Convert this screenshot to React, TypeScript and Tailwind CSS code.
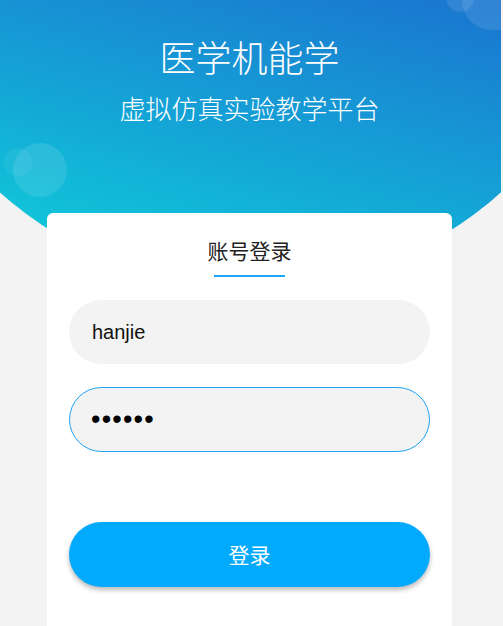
import { useState } from 'react';

const cjk = 'font-["Noto_Sans_CJK_SC","Liberation_Sans",sans-serif]';

export default function App() {
    const [account, setAccount] = useState('hanjie');
    const [password, setPassword] = useState('123456');

    return (
        <div className={`relative w-full h-[626px] overflow-hidden bg-[#f3f3f3] ${cjk}`}>
            {/* curved gradient banner behind the card */}
            <div className="absolute top-0 left-0 w-[501px] h-[288px] overflow-hidden bg-[linear-gradient(15deg,#10d4da_0%,#12b6d7_32%,#14a4d6_50%,#1793d4_68%,#1a74cf_100%)] [clip-path:circle(376px_at_50%_-88px)]">
                <span className="absolute left-[13px] top-[143px] w-[54px] h-[54px] rounded-full bg-white/10"></span>
                <span className="absolute left-[4px] top-[148px] w-[28px] h-[28px] rounded-full bg-white/5"></span>
                <span className="absolute left-[462px] top-[-30px] w-[70px] h-[60px] rounded-full bg-white/10"></span>
                <span className="absolute left-[446px] top-[-16px] w-[28px] h-[28px] rounded-full bg-white/10"></span>
            </div>

            <div className="relative w-[499px] flex flex-col items-center">
                <h1 className="mt-[34px] text-[36px] leading-[44px] font-light text-white">医学机能学</h1>
                <p className="mt-[14px] text-[26px] leading-[32px] font-light text-white">虚拟仿真实验教学平台</p>

                <div className="mt-[89px] w-[405px] h-[440px] rounded-[6px] bg-white px-[22px] flex flex-col">
                    <div className="pt-[22px] flex flex-col items-center">
                        <h2 className="text-[21px] leading-[30px] text-[#222]">账号登录</h2>
                        <span className="mt-[10px] w-[71px] h-[2px] bg-[#1ba6f6]"></span>
                    </div>

                    <input
                        value={account}
                        onChange={(e) => setAccount(e.target.value)}
                        className='mt-[23px] h-[64px] w-full rounded-full bg-[#f3f3f3] px-[23px] text-[20px] text-[#111] outline-none font-["Liberation_Sans",sans-serif]'
                    />
                    <input
                        type="password"
                        value={password}
                        onChange={(e) => setPassword(e.target.value)}
                        className='mt-[23px] h-[65px] w-full rounded-full bg-[#f3f3f3] border-[1.5px] border-[#1ba3f5] px-[21px] text-[27px] tracking-[1.2px] text-black outline-none font-["Liberation_Sans",sans-serif]'
                    />

                    <button className="mt-[70px] h-[65px] w-full rounded-full bg-[#02aafe] text-[21px] text-white shadow-[0_3px_5px_rgba(0,0,0,0.28)]">
                        登录
                    </button>
                </div>
            </div>
        </div>
    );
}
